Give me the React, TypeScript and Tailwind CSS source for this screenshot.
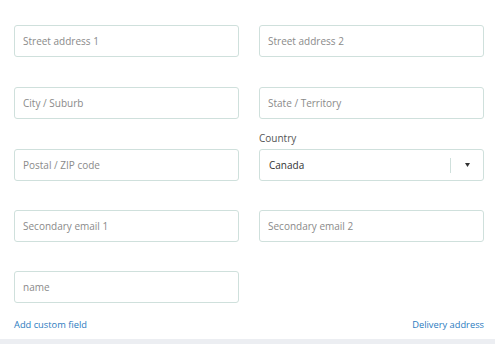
import React from 'react';

const inputCls =
  'w-full h-[32px] rounded-[3px] border border-[#cfe0dc] bg-white px-[8px] text-[10px] text-[#333] placeholder:text-[#8a8a8a] outline-none';

const Field = ({ placeholder }: { placeholder: string }) => (
  <input className={inputCls} placeholder={placeholder} />
);

export default function App() {
  return (
    <div className="w-[495px] h-[344px] bg-white overflow-hidden flex flex-col" style={{ fontFamily: '"Open Sans", "Noto Sans", sans-serif' }}>
      <div className="pl-[14px] pr-[11px] pt-[25px] h-[339px] flex flex-col">
        <div className="grid grid-cols-2 gap-x-[20px]">
          <Field placeholder="Street address 1" />
          <Field placeholder="Street address 2" />
        </div>

        <div className="grid grid-cols-2 gap-x-[20px] mt-[30px]">
          <Field placeholder="City / Suburb" />
          <Field placeholder="State / Territory" />
        </div>

        <div className="grid grid-cols-2 gap-x-[20px] items-end mt-[12px]">
          <Field placeholder="Postal / ZIP code" />
          <div className="flex flex-col">
            <label className="text-[10px] leading-[15px] text-[#555] mb-[3px]">Country</label>
            <div className="h-[32px] rounded-[3px] border border-[#cfe0dc] bg-white flex items-center pl-[9px] text-[10px] text-[#333]">
              <span className="flex-1">Canada</span>
              <div className="w-px h-[15px] bg-[#cfe0dc]" />
              <div className="w-[32px] flex items-center justify-center">
                <svg width="5" height="4" viewBox="0 0 5 4">
                  <path d="M0 0 L5 0 L2.5 4 Z" fill="#333" />
                </svg>
              </div>
            </div>
          </div>
        </div>

        <div className="grid grid-cols-2 gap-x-[20px] mt-[29px]">
          <Field placeholder="Secondary email 1" />
          <Field placeholder="Secondary email 2" />
        </div>

        <div className="grid grid-cols-2 gap-x-[20px] mt-[29px]">
          <Field placeholder="name" />
        </div>

        <div className="flex justify-between mt-[14px] text-[9.3px] leading-[15px] text-[#2b7bc0]">
          <a className="cursor-pointer">Add custom field</a>
          <a className="cursor-pointer">Delivery address</a>
        </div>
      </div>
      <div className="flex-1 bg-[#eceef2]" />
    </div>
  );
}
